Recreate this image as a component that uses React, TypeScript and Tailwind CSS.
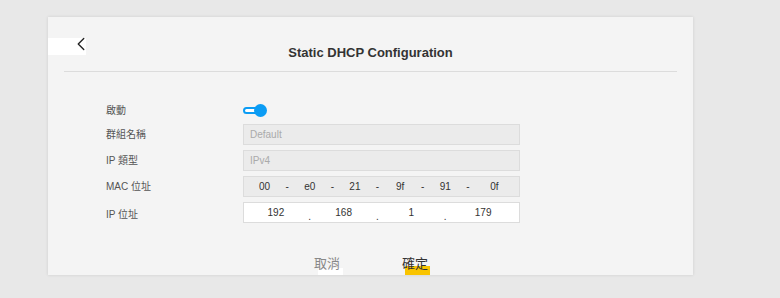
import { ChevronLeft } from 'lucide-react';

const font = { fontFamily: '"Liberation Sans", Arial, "Noto Sans CJK TC", sans-serif' };

function Segments({ parts, sep }: { parts: string[]; sep: string }) {
  return (
    <div className="flex items-center w-full">
      {parts.map((p, i) => (
        <div key={i} className="flex items-center flex-1">
          <span className="flex-1 text-center">{p}</span>
          {i < parts.length - 1 && (
            <span className={sep === '.' ? 'w-[8px] text-center pt-[8px]' : 'w-[8px] text-center'}>{sep}</span>
          )}
        </div>
      ))}
    </div>
  );
}

export default function App() {
  const mac = ['00', 'e0', '21', '9f', '91', '0f'];
  const ip = ['192', '168', '1', '179'];

  return (
    <div className="w-[780px] h-[298px] bg-[#e8e8e8] pt-[17px] pl-[48px] overflow-hidden" style={font}>
      <div className="w-[645px] h-[258px] bg-[#f4f4f4] shadow-[0_0_3px_rgba(0,0,0,0.12)] flex flex-col">
        <div className="relative h-[54px] flex items-end justify-center pb-[9px]">
          <div className="absolute left-0 top-[21px] w-[38px] h-[17px] bg-white">
            <ChevronLeft className="absolute left-[22px] -top-[5px] w-[22px] h-[22px] text-[#222]" strokeWidth={1.5} />
          </div>
          <h1 className="text-[13px] font-bold text-[#333]">Static DHCP Configuration</h1>
        </div>
        <div className="mx-[16px] h-[1px] bg-[#dcdcdc]" />

        <div className="pl-[58px] pt-[25px] flex flex-col">
          <div className="flex items-center h-[26px]">
            <div className="w-[137px] text-[10px] text-[#555]">啟動</div>
            <div className="relative w-[24px] h-[13px] flex items-center">
              <div className="w-[20px] h-[7px] rounded-full border-2 border-[#0b9cf4] bg-white" />
              <div className="absolute right-0 top-0 w-[13px] h-[13px] rounded-full bg-[#0b9cf4]" />
            </div>
          </div>
          <div className="flex flex-col gap-[5px] mt-[1px]">
            <div className="flex items-center">
              <div className="w-[137px] text-[10px] text-[#555]">群組名稱</div>
              <div className="w-[277px] h-[21px] border border-[#dcdcdc] bg-[#ebebeb] text-[10px] text-[#aaa] px-[6px] flex items-center">
                Default
              </div>
            </div>
            <div className="flex items-center">
              <div className="w-[137px] text-[10px] text-[#555]">IP 類型</div>
              <div className="w-[277px] h-[21px] border border-[#dcdcdc] bg-[#ebebeb] text-[10px] text-[#aaa] px-[6px] flex items-center">
                IPv4
              </div>
            </div>
            <div className="flex items-center">
              <div className="w-[137px] text-[10px] text-[#555]">MAC 位址</div>
              <div className="w-[277px] h-[21px] border border-[#dcdcdc] bg-[#ebebeb] text-[10px] text-[#333] px-[2px] flex items-center">
                <Segments parts={mac} sep="-" />
              </div>
            </div>
            <div className="flex items-center">
              <div className="w-[137px] text-[10px] text-[#555] pt-[3px]">IP 位址</div>
              <div className="w-[277px] h-[21px] border border-[#dcdcdc] bg-white text-[10px] text-[#333] px-[2px] flex items-center">
                <Segments parts={ip} sep="." />
              </div>
            </div>
          </div>
        </div>

        <div className="flex justify-center gap-[62px] mt-auto h-[18px] pl-[1px]">
          <div className="relative w-[26px] h-[18px]">
            <div className="absolute left-[4px] bottom-0 w-[25px] h-[7px] bg-white" />
            <span className="relative block text-[13px] text-[#888] leading-[14px]">取消</span>
          </div>
          <div className="relative w-[26px] h-[18px]">
            <div className="absolute left-[3px] bottom-0 w-[25px] h-[9px] bg-[#f9c400]" />
            <span className="relative block text-[13px] text-[#333] leading-[14px]">確定</span>
          </div>
        </div>
      </div>
    </div>
  );
}
